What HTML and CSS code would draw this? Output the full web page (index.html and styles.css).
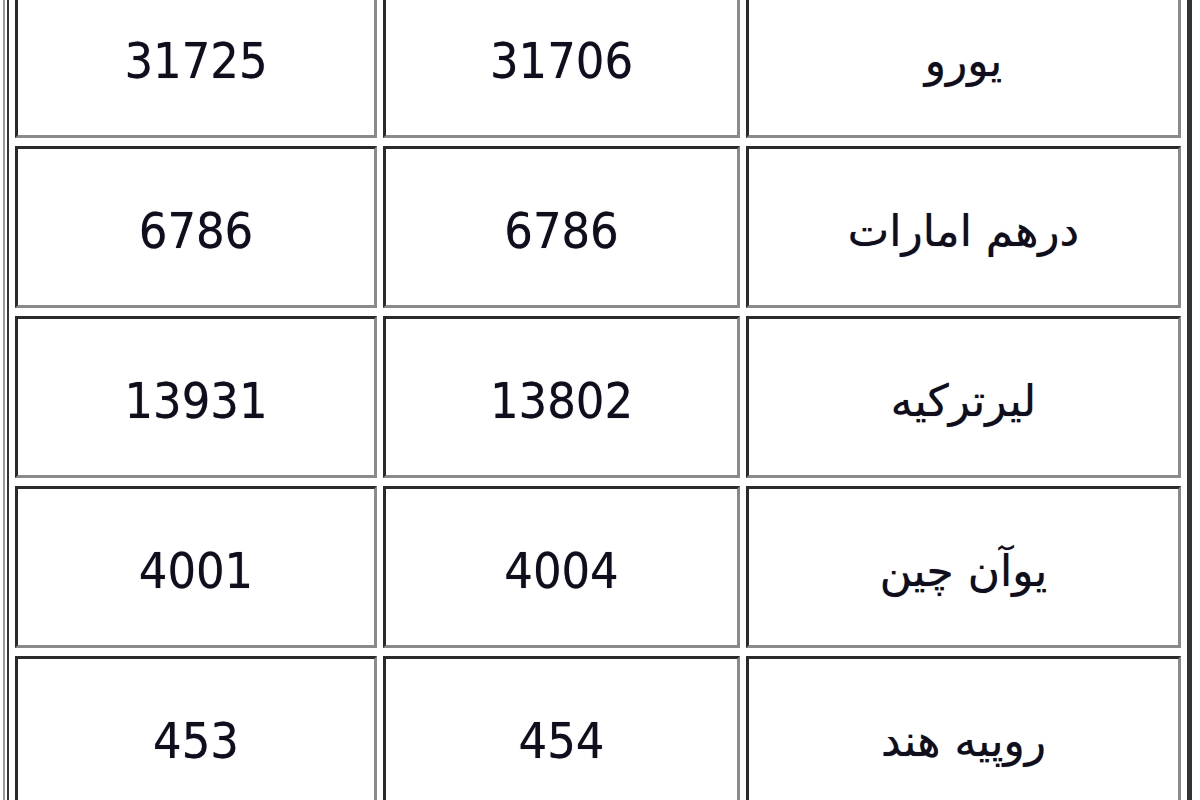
FILE: index.html
```html
<!DOCTYPE html>
<html lang="fa">
<head>
<meta charset="utf-8">
<title>نرخ ارز</title>
<link rel="stylesheet" href="styles.css">
</head>
<body>
<table class="rates" dir="rtl">
  <tbody>
    <tr class="row">
      <td class="cell name">یورو</td>
      <td class="cell num">31706</td>
      <td class="cell num">31725</td>
    </tr>
    <tr class="row">
      <td class="cell name">درهم امارات</td>
      <td class="cell num">6786</td>
      <td class="cell num">6786</td>
    </tr>
    <tr class="row">
      <td class="cell name">لیرترکیه</td>
      <td class="cell num">13802</td>
      <td class="cell num">13931</td>
    </tr>
    <tr class="row">
      <td class="cell name">یوآن چین</td>
      <td class="cell num">4004</td>
      <td class="cell num">4001</td>
    </tr>
    <tr class="row">
      <td class="cell name">روپیه هند</td>
      <td class="cell num">454</td>
      <td class="cell num">453</td>
    </tr>
  </tbody>
</table>
</body>
</html>
```

FILE: styles.css
```css
html, body {
  margin: 0;
  padding: 0;
  background: #ffffff;
  overflow: hidden;
}

.rates {
  box-sizing: border-box;
  width: 1189px;
  margin: -32px 0 0 3px;
  table-layout: fixed;
  border-collapse: separate;
  border-spacing: 6px 8px;
  border-top: 0;
  border-bottom: 0;
  border-left: 2px solid #9a9a9a;
  border-right: 5px solid #333333;
  padding: 0 0 0 4px;
  box-shadow: inset 2px 0 0 #ffffff, inset 4px 0 0 #333333;
  background: #ffffff;
}

.row {
  height: 162px;
}

.cell {
  padding: 8px 0 0 0;
  border-style: solid;
  border-width: 3px;
  border-color: #2a2a2a #8a8a8a #8a8a8a #2a2a2a;
  text-align: center;
  vertical-align: middle;
  color: #100e1c;
  font-family: "DejaVu Sans Condensed", "DejaVu Sans", sans-serif;
  font-size: 50px;
  line-height: 1.2;
  white-space: nowrap;
  text-shadow: 0 0 0.8px rgba(16, 14, 28, 0.7);
}

.cell:nth-child(1) {
  width: 429px;
}

.cell:nth-child(2) {
  width: 351px;
}

.cell:nth-child(3) {
  width: 356px;
}

.name {
  font-family: "DejaVu Sans", sans-serif;
  font-size: 44px;
}
```
